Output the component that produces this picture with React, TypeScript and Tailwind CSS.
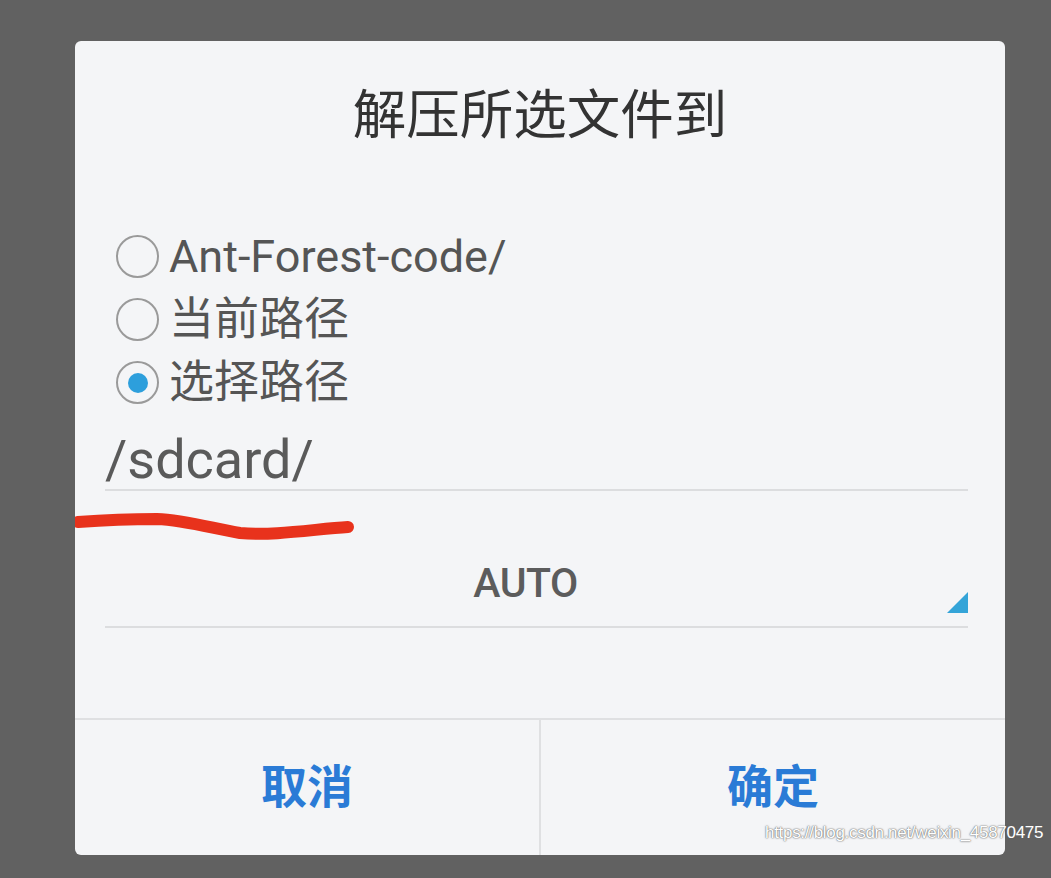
import { useState } from "react";

const latin = "font-['Roboto','Noto_Sans_CJK_SC',sans-serif]";

const options = ["Ant-Forest-code/", "当前路径", "选择路径"];

function Radio({ checked }: { checked: boolean }) {
  return (
    <span className="flex h-[43px] w-[43px] shrink-0 items-center justify-center rounded-full border-2 border-[#9a9a9a]">
      {checked && <span className="h-[20px] w-[20px] rounded-full bg-[#2d9fdc]" />}
    </span>
  );
}

export default function App() {
  const [selected, setSelected] = useState(2);

  return (
    <div className={`relative min-h-[878px] w-[1051px] bg-[#616161] pl-[75px] pt-[41px] ${latin}`}>
      <div className="relative flex h-[814px] w-[930px] flex-col rounded-[6px] bg-[#f4f5f7]">
        <h1 className="pt-[45px] text-center text-[53.5px] font-normal leading-[60px] text-[#333333]">
          解压所选文件到
        </h1>

        <div className="mt-[79px] flex flex-col pl-[41px]">
          {options.map((label, i) => (
            <button
              key={label}
              onClick={() => setSelected(i)}
              className="flex h-[63px] items-center gap-[10px] text-left"
            >
              <Radio checked={selected === i} />
              <span className="text-[45px] leading-none text-[#555555]">{label}</span>
            </button>
          ))}
        </div>

        <div className="ml-[30px] mr-[37px] mt-[18px] border-b-2 border-[#dcdddf] pb-[1px]">
          <span className="text-[54px] leading-[56px] text-[#5a5a5a]">/sdcard/</span>
        </div>

        <div className="relative ml-[30px] mr-[37px] mt-[57px] flex h-[70px] items-center justify-center pr-[22px]">
          <span className="text-[41px] font-medium leading-none tracking-[-0.5px] text-[#5c5c5c]">AUTO</span>
          <svg className="absolute bottom-[5px] right-0" width="21" height="21" viewBox="0 0 21 21">
            <polygon points="21,0 21,21 0,21" fill="#34a4d8" />
          </svg>
        </div>
        <div className="ml-[30px] mr-[37px] mt-[8px] border-b-2 border-[#dcdddf]" />

        <div className="flex-1" />

        <div className="flex h-[137px] border-t-2 border-[#dfe0e2]">
          <button className="flex flex-1 items-center justify-center border-r-2 border-[#dfe0e2] text-[46px] font-bold text-[#2a7bd6]">
            取消
          </button>
          <button className="flex flex-1 items-center justify-center text-[46px] font-bold text-[#2a7bd6]">
            确定
          </button>
        </div>

        <svg
          className="pointer-events-none absolute left-0 top-[468px]"
          width="290"
          height="40"
          viewBox="0 0 290 40"
        >
          <path
            d="M3,13 C30,11 60,10 82,10 C110,11 140,20 165,24 C200,27 240,20 273,18"
            fill="none"
            stroke="#e8321c"
            strokeWidth="12"
            strokeLinecap="round"
          />
        </svg>
      </div>

      <span className="pointer-events-none absolute left-[765px] top-[820px] font-['Liberation_Sans',sans-serif] text-[17px] tracking-[-0.3px] text-white [text-shadow:0_0_2px_#666,0_0_1px_#666]">
        https://blog.csdn.net/weixin_45870475
      </span>
    </div>
  );
}
